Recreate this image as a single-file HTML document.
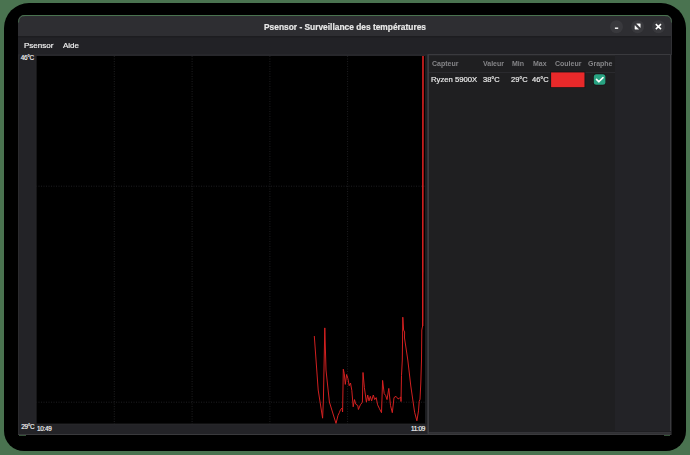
<!DOCTYPE html>
<html><head><meta charset="utf-8">
<style>
html,body{margin:0;padding:0;width:690px;height:455px;overflow:hidden;background:#4a7350;font-family:"Liberation Sans",sans-serif;}
.abs{position:absolute;}
#shadow{left:4.2px;top:3px;width:681.6px;height:447.6px;background:#000;border-radius:25px 25px 20px 20px;}
.t{position:absolute;white-space:nowrap;line-height:1;will-change:transform;-webkit-text-stroke:0.2px currentColor;}
.g{position:absolute;white-space:nowrap;line-height:1;font-size:6.4px;letter-spacing:-0.3px;-webkit-text-stroke:0.15px #fff;}
svg{position:absolute;left:0;top:0;}
</style></head>
<body>
<div id="shadow" class="abs"></div>
<svg width="690" height="455" viewBox="0 0 690 455">
  <defs><clipPath id="wc"><path d="M18,435 L18,22 Q18,15 25,15 L665,15 Q672,15 672,22 L672,435 Z"/></clipPath></defs>
  <g clip-path="url(#wc)">
  <rect x="18" y="15" width="654" height="420" fill="#232327"/>
  <!-- header bar -->
  <rect x="18" y="15" width="654" height="21" fill="#2e2e32"/>
  <rect x="18" y="15" width="654" height="1" fill="#4a7350"/>
  <rect x="18" y="36" width="654" height="1.6" fill="#1d1d20"/>
  <rect x="18" y="37.6" width="654" height="16.9" fill="#222226"/>
  <rect x="18" y="54.5" width="654" height="1" fill="#2c2c30"/>
  <rect x="18" y="55" width="1" height="380" fill="#2b2b2e"/>
  <rect x="671" y="15" width="1" height="420" fill="#303034"/>
  </g>
  <path d="M18.5,22.5 Q18.5,15.5 25.5,15.5" fill="none" stroke="#4a7350" stroke-width="1" opacity="0.8"/>
  <path d="M664.5,15.5 Q671.5,15.5 671.5,22.5" fill="none" stroke="#4a7350" stroke-width="1" opacity="0.8"/>
  <rect x="19" y="435" width="7" height="1" fill="#4a7350" opacity="0.7"/>
  <rect x="664" y="435" width="6" height="1" fill="#4a7350" opacity="0.7"/>
  <!-- graph -->
  <rect x="35.8" y="55.5" width="1" height="368.5" fill="#28282b"/>
  <rect x="36.6" y="56" width="388.4" height="367.8" fill="#000"/>
  <g stroke="#1e1e20" stroke-width="1" stroke-dasharray="1 1.5" fill="none">
    <line x1="114.3" y1="56" x2="114.3" y2="424"/>
    <line x1="192.1" y1="56" x2="192.1" y2="424"/>
    <line x1="269.9" y1="56" x2="269.9" y2="424"/>
    <line x1="347.6" y1="56" x2="347.6" y2="424"/>
    <line x1="36" y1="186.2" x2="425" y2="186.2"/>
    <line x1="36" y1="402.2" x2="425" y2="402.2"/>
  </g>
  <polyline fill="none" stroke="#dc2222" stroke-width="0.95" stroke-linejoin="round" points="314.3,336 318.2,390 322.6,418.2 323.4,400 324.8,327.9 326,370 329.4,402 336,423.5 338,415.4 339.3,412.7 340.6,409.5 342,408.1 342.6,412 343.3,369.2 344.3,373.8 345.3,384.4 346.6,374.5 347.9,378.5 349.2,385.7 350.5,383 351.8,390.3 353.2,406.8 354.5,399.6 355.8,404.2 357.8,405.5 358.4,409.5 360.4,404.8 362.4,402.2 363,372.5 364.4,387.7 366.4,402.2 367.7,395 369,400.9 370.3,396.3 371.6,400.9 373.3,395 374.7,399.6 376.2,397.6 377.6,404.8 379.5,408.8 381.5,412.7 382.6,380.4 384.2,393.6 385.7,395.6 387,399.6 388.8,388.4 390.5,405.5 392.3,412.7 394,397.6 396,396.3 398,398.9 399.2,398.5 400.8,396.9 401,401.5 401.5,375.4 402.3,360 402.8,317.2 403.6,330 404.6,332 404.5,338 407.8,360 410.8,386 414.6,412.3 416.9,420.8 418.5,410.8 419.2,401.5 420,399.2 420.8,383 421.5,360 421.8,330 422.6,326 423,56"/>
  <line x1="422.7" y1="326" x2="423" y2="56" stroke="#d82020" stroke-width="1.3"/>
  <!-- separator + panel -->
  <rect x="425" y="55.5" width="2.3" height="368.5" fill="#1c1d20"/>
  <rect x="36" y="423.7" width="389" height="1" fill="#29292c"/>
  <rect x="18" y="434" width="654" height="1" fill="#3a3a3d"/>
  <rect x="427.3" y="54" width="243.7" height="380" fill="#3a3a3e" rx="1"/>
  <rect x="671" y="55" width="1" height="380" fill="#1c1c1e"/>
  <rect x="429" y="55.3" width="241" height="376" fill="#1f1f21"/>
  <rect x="615" y="55.3" width="55" height="376" fill="#232327"/>
  <rect x="429" y="72" width="186" height="1" fill="#2a2a2e"/>
  <rect x="429" y="431.3" width="242" height="0.8" fill="#19191c"/>
  <rect x="429" y="432.9" width="242" height="0.8" fill="#2d2d30"/>
  <!-- color box + checkbox -->
  <rect x="550.3" y="71.6" width="35" height="16.4" fill="#121417"/>
  <rect x="551.1" y="72.4" width="33.4" height="14.8" fill="#e8292a"/>
  <rect x="593.2" y="73.6" width="12.8" height="11.8" rx="3" fill="#1a1315"/>
  <rect x="593.8" y="74.2" width="11.6" height="10.6" rx="2.5" fill="#28a382"/>
  <path d="M596.5,79.4 L598.8,81.8 L603,77.6" fill="none" stroke="#fff" stroke-width="1.6" stroke-linecap="round" stroke-linejoin="round"/>
  <!-- header buttons -->
  <circle cx="616.5" cy="26.7" r="6.5" fill="#39393d"/>
  <circle cx="637.6" cy="26.7" r="6.5" fill="#39393d"/>
  <circle cx="658.5" cy="26.7" r="6.5" fill="#39393d"/>
  <rect x="614.9" y="27.5" width="3.3" height="1.4" fill="#fff"/>
  <path d="M636.6,23.8 L640.3,23.8 L640.3,27.5 Z M634.9,25.5 L634.9,29.2 L638.6,29.2 Z" fill="#fff" stroke="#fff" stroke-width="0.4" stroke-linejoin="round"/>
  <path d="M655.8,24.1 L661,29.1 M661,24.1 L655.8,29.1" stroke="#fff" stroke-width="1.5"/>
</svg>
<div class="t" style="left:0;width:690px;text-align:center;top:23.2px;font-weight:bold;font-size:8.4px;color:#e8e8e8">Psensor - Surveillance des températures</div>
<div class="t" style="left:23.5px;top:42px;font-size:8px;color:#f0f0f0">Psensor</div>
<div class="t" style="left:62.5px;top:42px;font-size:8px;color:#f0f0f0">Aide</div>
<div class="g" style="left:20.8px;top:55.3px;color:#f4f4f4">46°C</div>
<div class="g" style="left:21.2px;top:423.7px;color:#f4f4f4">29°C</div>
<div class="g" style="left:37px;top:425.5px;color:#f4f4f4">10:49</div>
<div class="g" style="left:411px;top:425.5px;color:#f4f4f4">11:09</div>
<div class="t" style="left:432px;top:60.4px;font-size:7px;font-weight:bold;color:#858588;-webkit-text-stroke:0">Capteur</div>
<div class="t" style="left:483px;top:60.4px;font-size:7px;font-weight:bold;color:#858588;-webkit-text-stroke:0">Valeur</div>
<div class="t" style="left:511.5px;top:60.4px;font-size:7px;font-weight:bold;color:#858588;-webkit-text-stroke:0">Min</div>
<div class="t" style="left:533px;top:60.4px;font-size:7px;font-weight:bold;color:#858588;-webkit-text-stroke:0">Max</div>
<div class="t" style="left:554.5px;top:60.4px;font-size:7px;font-weight:bold;color:#858588;-webkit-text-stroke:0">Couleur</div>
<div class="t" style="left:588px;top:60.4px;font-size:7px;font-weight:bold;color:#858588;-webkit-text-stroke:0">Graphe</div>
<div class="t" style="left:431px;top:76.1px;font-size:7.7px;color:#e8e8e8">Ryzen 5900X</div>
<div class="t" style="left:482.5px;top:76.1px;font-size:7.5px;color:#e8e8e8">38°C</div>
<div class="t" style="left:510.5px;top:76.1px;font-size:7.5px;color:#e8e8e8">29°C</div>
<div class="t" style="left:532px;top:76.1px;font-size:7.5px;color:#e8e8e8">46°C</div>
</body></html>
